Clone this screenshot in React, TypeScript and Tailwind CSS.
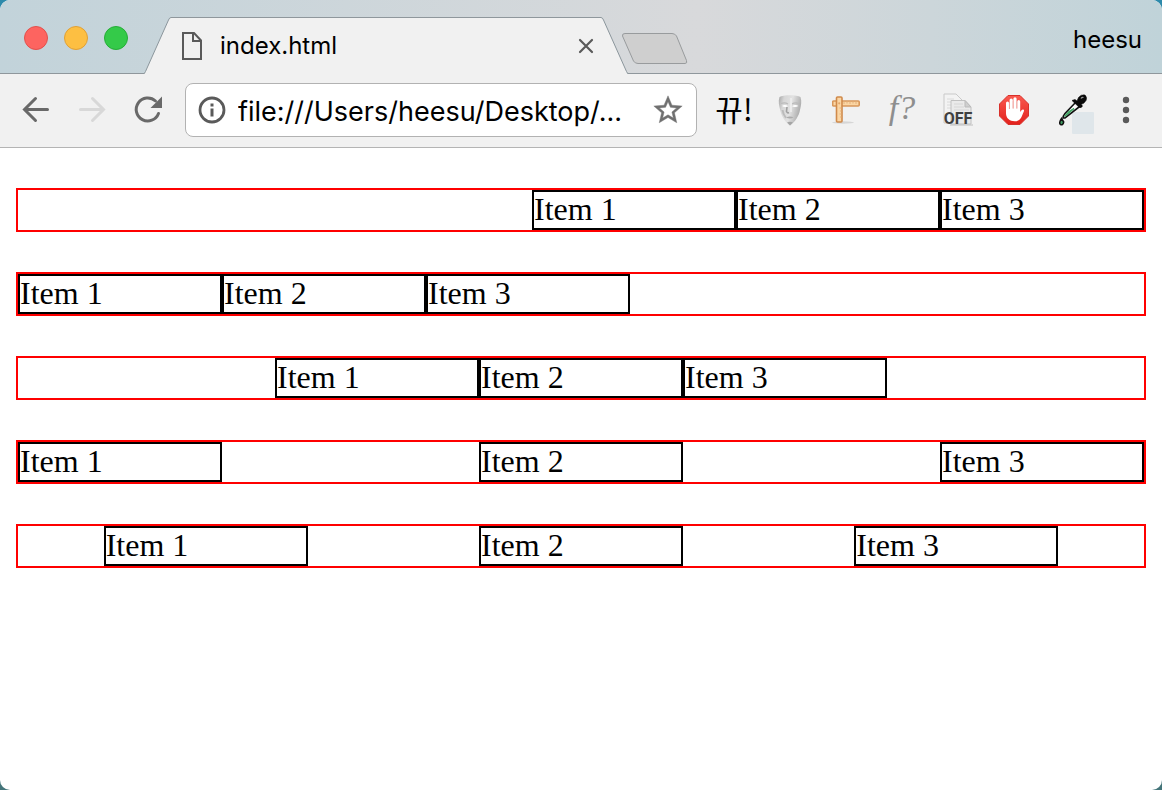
import type { ReactNode } from "react";

const rows = [
  { id: "end", justify: "justify-end" },
  { id: "start", justify: "justify-start" },
  { id: "center", justify: "justify-center" },
  { id: "between", justify: "justify-between" },
  { id: "around", justify: "justify-around" },
];

const items = ["Item 1", "Item 2", "Item 3"];

function ToolButton({ label, children }: { label: string; children: ReactNode }) {
  return (
    <button type="button" aria-label={label} className="flex h-14 w-14 shrink-0 items-center justify-center">
      {children}
    </button>
  );
}

function TrafficLights() {
  return (
    <div className="mt-[26px] ml-6 flex shrink-0 gap-4 self-start">
      <button type="button" aria-label="Close window" className="size-6 rounded-full border border-[#e2504c] bg-[#fd6460]" />
      <button type="button" aria-label="Minimize window" className="size-6 rounded-full border border-[#e0a036] bg-[#fdbf42]" />
      <button type="button" aria-label="Zoom window" className="size-6 rounded-full border border-[#25ad37] bg-[#34ca49]" />
    </div>
  );
}

function Tab() {
  return (
    <div className="-mb-px ml-4 flex h-[57px] w-[484px] items-stretch">
      <svg width="27" height="57" viewBox="0 0 27 57" className="shrink-0" aria-hidden="true">
        <path d="M0 57 C1 56.5 1 55.5 1.5 54.500 L24.500 3 Q25.500 .5 27 .5 V57Z" fill="#f1f1f1" />
        <path d="M0 56.500 Q.8 56.200 1.500 54.500 L24.500 3 Q25.500 .5 27 .5" fill="none" stroke="#8b969c" />
      </svg>
      <div className="flex min-w-0 flex-1 items-center border-t border-[#8f979c] bg-[#f1f1f1] pr-[7px] pl-[11px]">
        <svg width="20" height="28" viewBox="0 0 20 28" fill="none" stroke="#5a5a5a" strokeWidth="2" className="shrink-0" aria-hidden="true">
          <path d="M1 1H12L19 8.500V27H1Z" />
          <path d="M11 1V9H19" />
        </svg>
        <span className="ml-[18px] flex-1 truncate text-2xl">index.html</span>
        <button type="button" aria-label="Close tab" className="flex size-4 items-center justify-center">
          <svg width="16" height="16" viewBox="0 0 16 16" stroke="#5a5a5a" strokeWidth="2.200" strokeLinecap="round" aria-hidden="true">
            <path d="M2 2L14 14M14 2L2 14" />
          </svg>
        </button>
      </div>
      <svg width="27" height="57" viewBox="0 0 27 57" className="shrink-0" aria-hidden="true">
        <path d="M27 57 C26 56.500 26 55.500 25.500 54.500 L2.500 3 Q1.500 .5 0 .5 V57Z" fill="#f1f1f1" />
        <path d="M27 56.500 Q26.200 56.200 25.500 54.500 L2.500 3 Q1.500 .5 0 .5" fill="none" stroke="#8b969c" />
      </svg>
    </div>
  );
}

function MaskIcon() {
  return (
    <svg width="24" height="32" viewBox="0 0 24 32" aria-hidden="true">
      <defs>
        <linearGradient id="mask" x1="0" x2="1" y1="0" y2="0.3">
          <stop offset="0" stopColor="#a5a5a5" />
          <stop offset="0.25" stopColor="#d6d6d6" />
          <stop offset="0.6" stopColor="#e2e2e2" />
          <stop offset="1" stopColor="#adadad" />
        </linearGradient>
      </defs>
      <path d="M1.500 3C5 .5 19 .5 22.500 3C24 7 23 12 22 16C21 22 17 28 12 31.500C7 28 3.500 22 2.500 17C1 12 0 7 1.500 3Z" fill="url(#mask)" />
      <path d="M3 9.500Q7 8 10 10M14 10Q17 8 21 9.500" fill="none" stroke="#bababa" strokeWidth="1.200" />
      <path d="M4 12Q7 9.800 10 12.300Q7 14 4 12ZM14 12.300Q17 9.800 20.500 12Q17 14 14 12.300Z" fill="#fff" />
      <path d="M9 13L8.500 17.500Q9.500 19.500 11 18.500" fill="none" stroke="#a0a0a0" strokeWidth="1.600" />
      <path d="M8 23.500Q12 21.500 15.500 23.500Q12 25.500 8 23.500Z" fill="#ababab" />
      <path d="M4.500 16Q5 20 8 24" fill="none" stroke="#bcbcbc" strokeWidth="2" />
      <path d="M13 4V18" stroke="#efefef" strokeWidth="1.500" />
      <path d="M9 28.500Q12 27 15 28.500L12 31.500Z" fill="#a5a5a5" />
    </svg>
  );
}

function RulerIcon() {
  return (
    <svg width="28" height="28" viewBox="0 0 28 28" aria-hidden="true">
      <ellipse cx="11" cy="26.500" rx="11" ry="1.200" fill="#d6d6d6" />
      <rect x="0.700" y="5" width="26.500" height="5" rx="1" fill="#fbd6a4" stroke="#d8975a" strokeWidth="1.600" />
      <rect x="4.500" y="1" width="5.500" height="25" rx="1" fill="#fbd6a4" stroke="#d08a4b" strokeWidth="1.600" />
      <path d="M12 5.500V8M15 5.500V7.500M18 5.500V8M21 5.500V7.500M24 5.500V8M7.500 12H9.500M8 15H9.500M7.500 18H9.500M8 21H9.500" stroke="#e3b27e" />
      <circle cx="7.200" cy="7.300" r="1.100" fill="#e3a568" />
    </svg>
  );
}

function OffIcon() {
  return (
    <svg width="32" height="34" viewBox="0 0 32 34" aria-hidden="true">
      <path d="M2 1H14L20 7V30H2Z" fill="#f3f3f3" stroke="#c9c9c9" />
      <path d="M5 6H12M5 9H15M5 12H17M5 15H10" stroke="#dadada" />
      <path d="M9 7.500H23L29 14V31H9Z" fill="#eaeaea" stroke="#c0c0c0" />
      <path d="M23 7.500V14H29Z" fill="#cfcfcf" stroke="#bbb" />
      <path d="M12 11H21M12 14H22M12 17H27" stroke="#d6d6d6" />
      <path d="M8 32H31" stroke="#bdbdbd" />
      <text x="16" y="31" textAnchor="middle" className="font-['Roboto',sans-serif] text-base font-bold" fill="#3f3f3f">OFF</text>
    </svg>
  );
}

function HandIcon() {
  return (
    <svg width="30" height="30" viewBox="0 0 30 30" aria-hidden="true">
      <defs>
        <linearGradient id="stop" x1="0" x2="0" y1="0" y2="1">
          <stop offset="0" stopColor="#fa5a50" />
          <stop offset="1" stopColor="#e2211c" />
        </linearGradient>
      </defs>
      <path d="M9 .5H21L29.500 9V21L21 29.500H9L.5 21V9Z" fill="url(#stop)" stroke="#d8302a" />
      <path d="M7 17V8a1.500 1.500 0 0 1 3 0V14h.6V5a1.600 1.600 0 0 1 3.200 0V13.500h.6V3.800a1.600 1.600 0 0 1 3.200 0V13.500h.6V6.500a1.500 1.500 0 0 1 3 0V17l1.300-1.800c1-1.200 3-.8 2.400 1L22.500 22c-1.700 3.200-3.700 4.200-6.700 4.200C10.500 26.200 7 23 7 18.500Z" fill="#fff" />
      <path d="M10.300 8V14M14.100 6V13.500M17.900 6V13.500" stroke="#e9b8b5" strokeWidth="0.600" />
    </svg>
  );
}

function DropperIcon() {
  return (
    <svg width="36" height="40" viewBox="0 0 36 40" className="ml-[14px] mt-2 shrink-0" aria-hidden="true">
      <rect x="13" y="18" width="22" height="22" rx="1" fill="#dfe6ea" />
      <path d="M17 8L6 19.500Q4 22 4 24L6 24L22 11.500Z" fill="#fafafa" stroke="#111" strokeWidth="1.600" />
      <path d="M15 14.500L7.500 21L5.500 22.500L10 17.500Z" fill="#43a566" stroke="#43a566" strokeWidth="1.400" />
      <path d="M2.500 24.500Q-.5 29 1.500 30.500Q4 31.500 4.700 28Z" fill="#3f9b60" stroke="#111" strokeWidth="1.500" />
      <path d="M13 6.500L16 5.500L18 7L19.500 3.500Q22 .2 26 1Q28.500 3.500 27 6.500Q25 10 22 10.500L23.500 12Q22.500 14.500 20 13.200Z" fill="#0b0b0b" stroke="#0b0b0b" strokeWidth="0.600" />
      <path d="M22 4.500Q23 3 24.500 3.500" fill="none" stroke="#999" strokeWidth="1.200" />
    </svg>
  );
}

function Toolbar() {
  return (
    <div className="flex h-[74px] items-center border-b border-[#b4b4b4] bg-[#f1f1f1] px-2 pb-0.5">
      <ToolButton label="Back">
        <svg width="28" height="28" viewBox="0 0 28 28" fill="none" stroke="#696969" strokeWidth="3" strokeLinecap="round" aria-hidden="true">
          <path d="M25.500 13.500H3M13.500 2.500L2.500 13.500L13.500 24.500" />
        </svg>
      </ToolButton>
      <ToolButton label="Forward">
        <svg width="28" height="28" viewBox="0 0 28 28" fill="none" stroke="#d8d8d8" strokeWidth="3" strokeLinecap="round" aria-hidden="true">
          <path d="M2.500 13.500H25M14.500 2.500L25.500 13.500L14.500 24.500" />
        </svg>
      </ToolButton>
      <ToolButton label="Reload">
        <svg width="30" height="30" viewBox="0 0 30 30" aria-hidden="true">
          <path d="M25.500 18.500A11.500 11.500 0 1 1 22.500 6" fill="none" stroke="#696969" strokeWidth="3" strokeLinecap="round" />
          <path d="M29 1.500V13H17.500Z" fill="#696969" />
        </svg>
      </ToolButton>
      <div className="mx-[9px] flex h-[54px] min-w-0 flex-1 items-center rounded-lg border border-[#b2b2b2] bg-white pr-[11px] pl-2.5">
        <svg width="32" height="32" viewBox="0 0 32 32" className="shrink-0" aria-hidden="true">
          <circle cx="16" cy="16" r="12" fill="none" stroke="#5a5a5a" strokeWidth="2.800" />
          <path d="M14.500 9.500H17.500V12.500H14.500ZM14.500 14.500H17.500V22.500H14.500Z" fill="#5a5a5a" />
        </svg>
        <input
          type="text"
          aria-label="Address"
          defaultValue="file:///Users/heesu/Desktop/..."
          className="ml-2.5 h-11 min-w-0 flex-1 bg-transparent pt-1 text-[27px] outline-none"
        />
        <button type="button" aria-label="Bookmark this page" className="shrink-0">
          <svg width="34" height="34" viewBox="0 0 24 24" fill="#707070" stroke="#707070" strokeWidth="0.300" aria-hidden="true">
            <path d="M22 9.240l-7.190-.62L12 2 9.190 8.630 2 9.240l5.460 4.730L5.820 21 12 17.270 18.180 21l-1.630-7.030L22 9.240zM12 15.400l-3.760 2.270 1-4.280-3.320-2.880 4.380-.38L12 6.100l1.710 4.040 4.380.38-3.320 2.880 1 4.280L12 15.400z" />
          </svg>
        </button>
      </div>
      <ToolButton label="뀨!">
        <span className="pb-1 font-['Noto_Sans_CJK_KR',sans-serif] text-3xl">뀨!</span>
      </ToolButton>
      <ToolButton label="Mask">
        <MaskIcon />
      </ToolButton>
      <ToolButton label="Ruler">
        <RulerIcon />
      </ToolButton>
      <ToolButton label="Font finder">
        <span className="pb-1 font-['Liberation_Serif',serif] text-[34px] leading-10 text-[#8e8e8e] italic">f?</span>
      </ToolButton>
      <ToolButton label="Off">
        <OffIcon />
      </ToolButton>
      <ToolButton label="Ad blocker">
        <HandIcon />
      </ToolButton>
      <ToolButton label="Color picker">
        <DropperIcon />
      </ToolButton>
      <ToolButton label="Menu">
        <svg width="8" height="28" viewBox="0 0 8 28" fill="#5a5a5a" aria-hidden="true">
          <circle cx="4" cy="4" r="3.200" />
          <circle cx="4" cy="14" r="3.200" />
          <circle cx="4" cy="24" r="3.200" />
        </svg>
      </ToolButton>
    </div>
  );
}

export default function App() {
  return (
    <div className="min-h-screen bg-linear-to-b from-[#2d8aab] to-[#44757a] font-['Inter',sans-serif] text-black">
      <div className="flex min-h-screen flex-col overflow-hidden rounded-[10px] bg-white">
        <header>
          <div className="flex h-[74px] items-end border-b border-[#8f979c] bg-linear-to-r from-[#c2d3da] via-[#d8d9db] via-60% to-[#c0d3d9]">
            <TrafficLights />
            <Tab />
            <button type="button" aria-label="New tab" className="mt-8 -ml-[7px] shrink-0 self-start">
              <svg width="68" height="33" viewBox="0 0 68 33" aria-hidden="true">
                <path d="M4 1.500H51Q54 1.500 55.500 4L65.500 28.500Q66.500 31.500 64 31.500H17Q14 31.500 12.500 29L1.500 4Q1 1.500 4 1.500Z" fill="#cfcfcf" stroke="#989b9d" />
              </svg>
            </button>
            <button type="button" className="mt-6 mr-5 ml-auto self-start text-2xl">heesu</button>
          </div>
          <Toolbar />
        </header>
        <main className="flex flex-col gap-10 px-4 py-10 font-['Liberation_Serif',serif] text-[32px] leading-[34px]">
          {rows.map((row) => (
            <div key={row.id} className={`flex border-2 border-[#ff0000] ${row.justify}`}>
              {items.map((item) => (
                <div key={item} className="w-[204px] border-2 border-black pb-0.5">
                  {item}
                </div>
              ))}
            </div>
          ))}
        </main>
      </div>
    </div>
  );
}
